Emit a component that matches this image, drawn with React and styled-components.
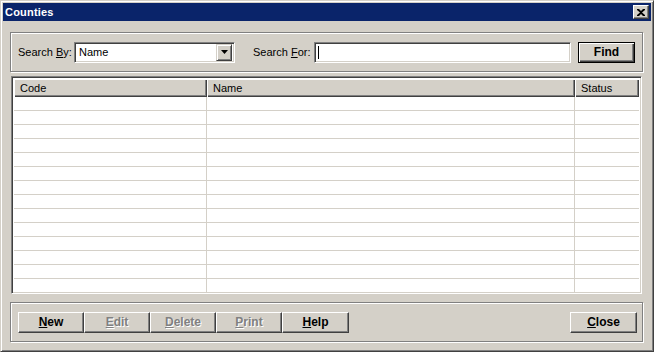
import React from "react";
import styled, { createGlobalStyle, css } from "styled-components";

const Global = createGlobalStyle`
  html, body { margin: 0; padding: 0; background: #d4d0c8; }
  body { font-family: "Liberation Sans", Arial, sans-serif; font-size: 11px; color: #000; }
`;

const raised = css`
  border: 1px solid;
  border-color: #ffffff #404040 #404040 #ffffff;
  box-shadow: inset -1px -1px #808080;
`;

const sunken = css`
  border: 1px solid;
  border-color: #808080 #ffffff #ffffff #808080;
  box-shadow: inset 1px 1px #404040, inset -1px -1px #d4d0c8;
`;

const etched = css`
  border: 1px solid #808080;
  box-shadow: inset 1px 1px #ffffff, 1px 1px #ffffff;
`;

const Window = styled.div`
  width: 654px;
  height: 352px;
  box-sizing: border-box;
  background: #d4d0c8;
  border: 1px solid;
  border-color: #d4d0c8 #404040 #404040 #d4d0c8;
  box-shadow: inset 1px 1px #ffffff, inset -1px -1px #808080;
  padding: 2px;
  display: flex;
  flex-direction: column;
`;

const TitleBar = styled.div`
  height: 18px;
  background: #0a246a;
  display: flex;
  align-items: center;
  justify-content: space-between;
  padding: 0 2px 0 2px;
`;

const TitleText = styled.span`
  color: #ffffff;
  font-weight: bold;
  font-size: 11px;
  letter-spacing: 0.2px;
`;

const TitleButton = styled.div`
  width: 16px;
  height: 14px;
  box-sizing: border-box;
  background: #d4d0c8;
  ${raised};
  display: flex;
  align-items: center;
  justify-content: center;
`;

const Body = styled.div`
  flex: 1;
  display: flex;
  flex-direction: column;
  padding: 0 8px 0 7px;
`;

const Group = styled.div`
  box-sizing: border-box;
  height: 40px;
  margin-top: ${(p) => p.$top}px;
  ${etched};
  display: flex;
  align-items: center;
  padding: 0 ${(p) => p.$right}px 0 7px;
`;

const Label = styled.span`
  width: ${(p) => p.$w}px;
  margin-left: ${(p) => p.$ml || 0}px;
  white-space: nowrap;
`;

const U = styled.span`
  text-decoration: underline;
  text-underline-offset: 1px;
`;

const Combo = styled.div`
  box-sizing: border-box;
  width: 161px;
  height: 21px;
  background: #ffffff;
  ${sunken};
  display: flex;
  align-items: center;
  padding: 2px 2px 2px 4px;
`;

const ComboText = styled.span`
  flex: 1;
`;

const DropButton = styled.div`
  box-sizing: border-box;
  width: 16px;
  height: 17px;
  background: #d4d0c8;
  border: 1px solid;
  border-color: #d4d0c8 #404040 #404040 #d4d0c8;
  box-shadow: inset 1px 1px #ffffff, inset -1px -1px #808080;
  display: flex;
  align-items: center;
  justify-content: center;
`;

const TextBox = styled.div`
  box-sizing: border-box;
  width: 257px;
  height: 21px;
  background: #ffffff;
  ${sunken};
  display: flex;
  align-items: center;
  padding-left: 3px;
`;

const Caret = styled.span`
  width: 1px;
  height: 13px;
  background: #000;
`;

const Button = styled.button`
  box-sizing: border-box;
  width: ${(p) => p.$w}px;
  height: 21px;
  margin-left: ${(p) => (p.$auto ? "auto" : `${p.$ml || 0}px`)};
  padding: 0;
  background: #d4d0c8;
  font-family: "Liberation Sans", Arial, sans-serif;
  font-size: 12px;
  font-weight: bold;
  color: ${(p) => (p.$disabled ? "#808080" : "#000")};
  text-shadow: ${(p) => (p.$disabled ? "1px 1px #ffffff" : "none")};
  ${(p) =>
    p.$default
      ? css`
          border: 1px solid #000;
          box-shadow: inset 1px 1px #ffffff, inset -1px -1px #404040, inset -2px -2px #808080;
        `
      : raised}
  display: flex;
  align-items: center;
  justify-content: center;
  cursor: default;
`;

const Table = styled.div`
  box-sizing: border-box;
  height: 218px;
  margin: 4px 1px 0 1px;
  background: #ffffff;
  ${sunken};
  padding: 2px;
  display: flex;
  flex-direction: column;
  overflow: hidden;
`;

const HeaderRow = styled.div`
  display: flex;
  height: 18px;
  flex: none;
`;

const HeaderCell = styled.div`
  box-sizing: border-box;
  width: ${(p) => (p.$w ? `${p.$w}px` : "auto")};
  flex: ${(p) => (p.$w ? "none" : "1")};
  height: 18px;
  background: #d4d0c8;
  box-shadow: inset 1px 1px #ffffff, inset -1px -1px #404040, inset -2px -2px #808080;
  display: flex;
  align-items: center;
  padding: 0 0 1px 6px;
`;

const Row = styled.div`
  display: flex;
  height: 14px;
  flex: none;
  box-sizing: border-box;
  border-bottom: 1px solid #d4d0c8;
`;

const Cell = styled.div`
  box-sizing: border-box;
  width: ${(p) => (p.$w ? `${p.$w}px` : "auto")};
  flex: ${(p) => (p.$w ? "none" : "1")};
  border-right: ${(p) => (p.$w ? "1px solid #d4d0c8" : "none")};
`;

const columns = [
  { title: "Code", w: 193 },
  { title: "Name", w: 368 },
  { title: "Status" },
];

const rows = Array.from({ length: 14 }, (_, i) => i);

export default function App() {
  return (
    <>
      <Global />
      <Window>
        <TitleBar>
          <TitleText>Counties</TitleText>
          <TitleButton>
            <svg width="8" height="7" viewBox="0 0 8 7">
              <path d="M0 0h2l2 2 2-2h2v1L5 3.5 8 6v1H6L4 5 2 7H0V6l3-2.5L0 1z" fill="#000" />
            </svg>
          </TitleButton>
        </TitleBar>
        <Body>
          <Group $top={11} $right={6}>
            <Label $w={56}>
              Search <U>B</U>y:
            </Label>
            <Combo>
              <ComboText>Name</ComboText>
              <DropButton>
                <svg width="7" height="4" viewBox="0 0 7 4">
                  <path d="M0 0h7L3.5 4z" fill="#000" />
                </svg>
              </DropButton>
            </Combo>
            <Label $w={61} $ml={18}>
              Search <U>F</U>or:
            </Label>
            <TextBox>
              <Caret />
            </TextBox>
            <Button $w={57} $ml={7} $default>
              Find
            </Button>
          </Group>
          <Table>
            <HeaderRow>
              {columns.map((c) => (
                <HeaderCell key={c.title} $w={c.w}>
                  {c.title}
                </HeaderCell>
              ))}
            </HeaderRow>
            {rows.map((r) => (
              <Row key={r}>
                {columns.map((c) => (
                  <Cell key={c.title} $w={c.w} />
                ))}
              </Row>
            ))}
          </Table>
          <Group $top={8} $right={5}>
            <Button $w={66}>
              <U>N</U>ew
            </Button>
            <Button $w={66} $disabled>
              <U>E</U>dit
            </Button>
            <Button $w={66} $disabled>
              <U>D</U>elete
            </Button>
            <Button $w={66} $disabled>
              <U>P</U>rint
            </Button>
            <Button $w={67}>
              <U>H</U>elp
            </Button>
            <Button $w={67} $auto>
              <U>C</U>lose
            </Button>
          </Group>
        </Body>
      </Window>
    </>
  );
}
